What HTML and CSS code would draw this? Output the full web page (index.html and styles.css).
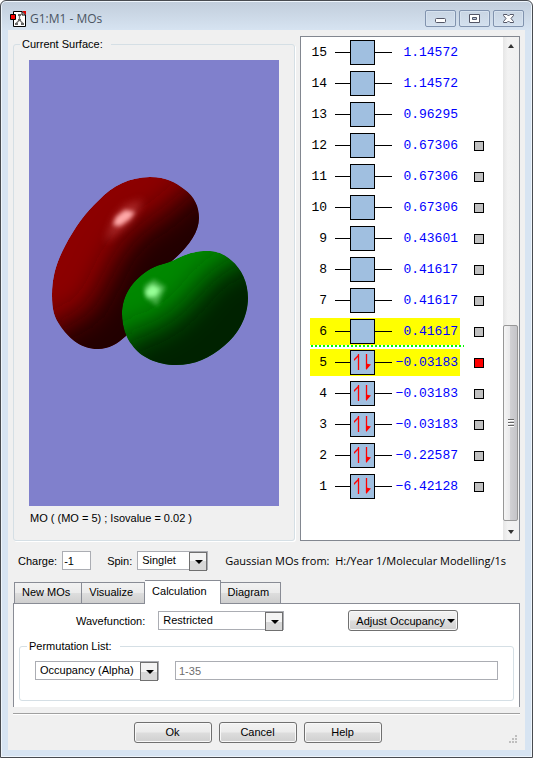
FILE: index.html
```html
<!DOCTYPE html>
<html lang="en">
<head>
  <meta charset="UTF-8">
  <meta name="viewport" content="width=device-width, initial-scale=1.0">
  <title>G1:M1 - MOs</title>
  <link rel="stylesheet" href="styles.css">
</head>
<body>

<!-- shared orbital arrows -->
<svg class="defs" width="0" height="0" aria-hidden="true">
  <symbol id="pair" viewBox="0 0 23 23">
    <path d="M7.5 19V3" fill="none" stroke="#f00" stroke-width="1.3"/>
    <path d="M8 3L3 8V10L8 5z" fill="#f00"/>
    <path d="M15.500 3V18" stroke="#f00" stroke-width="1.3"/>
    <path d="M15 19V12.500L20 13.500z" fill="#f00"/>
  </symbol>
</svg>

<div class="window">
  <header class="titlebar">
    <svg class="app-icon" width="16" height="16" viewBox="0 0 16 16" aria-hidden="true">
      <path d="M3.500 .5H12L15.500 4V15.500H3.500z" fill="#fff" stroke="#000"/>
      <path d="M12 0L16 4V0z" fill="#d00"/>
      <path d="M12 .5V4H15.500" fill="none" stroke="#000"/>
      <path d="M9.500 4V9M9.500 9L6 12.500M9.500 9L13 12.500" stroke="#777" stroke-width="1.3"/>
      <path d="M8 3h3v2h-3zM8 8h3v2h-3zM5 12h3v2h-3zM11 12h3v2h-3z" fill="#666"/>
      <path d="M.5 3.500h5v5h-5z" fill="#f00" stroke="#000"/>
    </svg>
    <h1>G1:M1 - MOs</h1>
    <div class="window-buttons">
      <button type="button" aria-label="Minimize">
        <svg width="13" height="13" viewBox="0 0 13 13"><rect x="1.500" y="6.500" width="10" height="4" rx="1" fill="#fff" stroke="#535666"/></svg>
      </button>
      <button type="button" aria-label="Maximize">
        <svg width="13" height="13" viewBox="0 0 13 13"><path d="M1.500 2.500h10v8h-10z" fill="#fff" stroke="#535666"/><path d="M4.500 5.500h4v2h-4z" fill="#b8c8dc" stroke="#535666"/></svg>
      </button>
      <button type="button" aria-label="Close">
        <svg width="13" height="13" viewBox="0 0 13 13"><path d="M1.500 2.500h3.500l1.500 1.500 1.500-1.500h3.500v1l-2.500 3 2.500 3v1h-3.500l-1.500-1.500-1.500 1.500h-3.500v-1l2.500-3-2.500-3z" fill="#fff" stroke="#535666"/></svg>
      </button>
    </div>
  </header>

  <main class="client">
    <div class="viewer">
      <fieldset class="surface">
        <legend>Current Surface:</legend>
        <svg class="canvas" viewBox="0 0 250 446" preserveAspectRatio="xMidYMid meet" role="img" aria-label="Orbital surface">
          <defs>
            <filter id="soft" x="-50%" y="-50%" width="200%" height="200%"><feGaussianBlur stdDeviation="16"/></filter>
            <filter id="glint" x="-50%" y="-50%" width="200%" height="200%"><feGaussianBlur stdDeviation="4"/></filter>
            <filter id="spark" x="-50%" y="-50%" width="200%" height="200%"><feGaussianBlur stdDeviation="2"/></filter>
            <path id="redLobe" d="M121 117C138 117 147 123 155 129C166 137 170 147 170 158C170 174 157 189 143 201L130 240L97 276C88 284 80 289 69 289C52 289 41 279 32 267C25 257 23 250 23 235C23 216 28 201 36 186C46 167 56 153 70 140C83 126 101 117 121 117z"/>
            <path id="greenLobe" d="M178 191C190 191 196 195 202 200C213 209 219 223 219 238C219 257 209 275 195 286C181 298 166 305 147 305C128 305 111 297 103 285C97 278 93 266 93 254C93 236 103 221 118 211C128 204 137 204 145 200C155 195 164 191 178 191z"/>
            <clipPath id="redClip"><use href="#redLobe"/></clipPath>
            <clipPath id="greenClip"><use href="#greenLobe"/></clipPath>
          </defs>
          <g clip-path="url(#redClip)">
            <use href="#redLobe" fill="#8c0000"/>
            <path d="M200 105L163 128L138 152L106 172L87 198L74 226L58 254L15 270L20 340H240z" fill="#200000" filter="url(#soft)"/>
            <path d="M76 182L86 157L96 146L114 140L101 162z" fill="#d05050" opacity=".6" filter="url(#glint)"/>
            <path d="M84 165L87 157L96 150L106 152L101 159L91 166z" fill="#ffa8a8" filter="url(#spark)"/>
          </g>
          <g clip-path="url(#greenClip)">
            <use href="#greenLobe" fill="#008800"/>
            <path d="M250 185L207 200L180 217L160 243L135 264L85 282L90 345H260z" fill="#002000" filter="url(#soft)"/>
            <path d="M115 226L125 219L137 227L128 246L117 238z" fill="#5cc05c" opacity=".7" filter="url(#spark)"/>
            <path d="M116 231L123 224L132 229L127 237L118 237z" fill="#96ff96" filter="url(#spark)"/>
          </g>
        </svg>
        <p>MO ( (MO = 5) ; Isovalue = 0.02 )</p>
      </fieldset>

      <section class="levels" aria-label="Orbital energies">
        <ol class="orbitals">
          <li><span class="orbital"><b>15</b><i></i><span>1.14572</span></span></li>
          <li><span class="orbital"><b>14</b><i></i><span>1.14572</span></span></li>
          <li><span class="orbital"><b>13</b><i></i><span>0.96295</span></span></li>
          <li><span class="orbital"><b>12</b><i></i><span>0.67306</span></span><input type="checkbox" aria-label="MO 12"></li>
          <li><span class="orbital"><b>11</b><i></i><span>0.67306</span></span><input type="checkbox" aria-label="MO 11"></li>
          <li><span class="orbital"><b>10</b><i></i><span>0.67306</span></span><input type="checkbox" aria-label="MO 10"></li>
          <li><span class="orbital"><b>9</b><i></i><span>0.43601</span></span><input type="checkbox" aria-label="MO 9"></li>
          <li><span class="orbital"><b>8</b><i></i><span>0.41617</span></span><input type="checkbox" aria-label="MO 8"></li>
          <li><span class="orbital"><b>7</b><i></i><span>0.41617</span></span><input type="checkbox" aria-label="MO 7"></li>
          <li class="lumo"><span class="orbital selected"><b>6</b><i></i><span>0.41617</span></span><input type="checkbox" aria-label="MO 6"></li>
          <li><span class="orbital selected"><b>5</b><i><svg><use href="#pair"/></svg></i><span>−0.03183</span></span><input type="checkbox" aria-label="MO 5" checked></li>
          <li><span class="orbital"><b>4</b><i><svg><use href="#pair"/></svg></i><span>−0.03183</span></span><input type="checkbox" aria-label="MO 4"></li>
          <li><span class="orbital"><b>3</b><i><svg><use href="#pair"/></svg></i><span>−0.03183</span></span><input type="checkbox" aria-label="MO 3"></li>
          <li><span class="orbital"><b>2</b><i><svg><use href="#pair"/></svg></i><span>−0.22587</span></span><input type="checkbox" aria-label="MO 2"></li>
          <li><span class="orbital"><b>1</b><i><svg><use href="#pair"/></svg></i><span>−6.42128</span></span><input type="checkbox" aria-label="MO 1"></li>
        </ol>
        <div class="scrollbar">
          <button type="button" class="scroll-up" aria-label="Scroll up"></button>
          <div class="track"><div class="thumb"></div></div>
          <button type="button" class="scroll-down" aria-label="Scroll down"></button>
        </div>
      </section>
    </div>

    <div class="state">
      <label for="charge">Charge:</label>
      <input type="text" id="charge" value="-1">
      <label for="spin">Spin:</label>
      <span class="dropdown spin"><select id="spin"><option>Singlet</option></select></span>
      <span class="source">Gaussian MOs from:&nbsp; H:/Year 1/Molecular Modelling/1s</span>
    </div>

    <div class="tabs" role="tablist">
      <button type="button" role="tab">New MOs</button>
      <button type="button" role="tab">Visualize</button>
      <button type="button" role="tab" class="active" aria-selected="true">Calculation</button>
      <button type="button" role="tab">Diagram</button>
    </div>

    <div class="panel" role="tabpanel">
      <div class="wave">
        <label for="wavefunction">Wavefunction:</label>
        <span class="dropdown"><select id="wavefunction"><option>Restricted</option></select></span>
        <button type="button" class="btn adjust">Adjust Occupancy</button>
      </div>
      <fieldset class="permutation">
        <legend>Permutation List:</legend>
        <div class="permutation-row">
          <span class="dropdown"><select aria-label="Permutation type"><option>Occupancy (Alpha)</option></select></span>
          <input type="text" aria-label="Permutation list" value="1-35" disabled>
        </div>
      </fieldset>
    </div>

    <footer class="actions">
      <button type="button" class="btn">Ok</button>
      <button type="button" class="btn">Cancel</button>
      <button type="button" class="btn">Help</button>
      <svg class="grip" width="8" height="8" viewBox="0 0 8 8" aria-hidden="true">
        <path d="M6 0h2v2h-2zM3 3h2v2h-2zM6 3h2v2h-2zM0 6h2v2h-2zM3 6h2v2h-2zM6 6h2v2h-2z" fill="#bfbfbf"/>
      </svg>
    </footer>
  </main>
</div>

</body>
</html>
```
FILE: styles.css
```css
* {
  box-sizing: border-box;
}

body {
  margin: 0;
  background-color: #fff;
  font-family: "Liberation Sans", Arial, sans-serif;
  font-size: 11px;
  line-height: 14px;
  color: #000;
}

.defs {
  display: none;
}

button,
input,
select {
  font: inherit;
  color: inherit;
  margin: 0;
}

fieldset {
  margin: 0;
  min-width: 0;
  border: 1px solid #d5dfe5;
  border-radius: 3px;
}

legend {
  padding: 0 8px 0 2px;
}

.window {
  display: flex;
  flex-direction: column;
  min-height: 100vh;
  padding: 0 7px 7px;
  border: 1px solid #484b50;
  border-radius: 6px 6px 0 0;
  background: linear-gradient(#c1cddb, #d7e4f2 30px);
  box-shadow: inset 0 0 0 1px #eef5fc;
}

/* title bar */
.titlebar {
  display: flex;
  align-items: center;
  height: 29px;
  padding: 6px 1px 0 2px;
  gap: 4px;
}

.titlebar h1 {
  flex: 1;
  margin: 0;
  font-family: "Open Sans", "Segoe UI", sans-serif;
  font-size: 12px;
  font-weight: normal;
  color: #4b5563;
}

.window-buttons {
  display: flex;
  gap: 3px;
}

.window-buttons button {
  display: flex;
  align-items: center;
  justify-content: center;
  width: 31px;
  height: 17px;
  padding: 0;
  border: 1px solid #8193ae;
  border-radius: 2px;
  background: none;
  box-shadow: inset 0 0 0 1px #d6e2ef;
}

.client {
  flex: 1;
  display: flex;
  flex-direction: column;
  padding: 6px 5px 7px;
  background-color: #f0f0f0;
}

/* surface and energy levels */
.viewer {
  flex: 1;
  display: flex;
  gap: 5px;
}

.surface {
  flex: 1;
  display: flex;
  flex-direction: column;
  margin-top: 1px;
  padding: 9px 15px 15px;
  box-shadow: 1px 1px 0 #fff;
}

.surface legend {
  margin-left: -9px;
}

.canvas {
  flex: 1;
  width: 100%;
  height: 0;
  min-height: 0;
  background-color: #8080cc;
}

.surface p {
  margin: 5px 0 0 1px;
}

.levels {
  display: flex;
  width: 220px;
  border: 1px solid #828790;
  background-color: #fff;
}

.orbitals {
  flex: 1;
  display: flex;
  flex-direction: column;
  gap: 4px;
  margin: 0;
  padding: 2px 0 0 9px;
  list-style: none;
  font-family: "Liberation Mono", "Courier New", monospace;
  font-size: 13px;
}

.orbitals li {
  position: relative;
  display: flex;
  align-items: center;
  gap: 14px;
}

.orbital {
  display: flex;
  align-items: center;
  width: 150px;
  height: 27px;
}

.orbital.selected {
  background-color: #ff0;
}

.orbital b {
  width: 17px;
  margin-right: 8px;
  font-weight: normal;
  text-align: right;
}

/* box with a short level line on each side */
.orbital i {
  display: flex;
  align-items: center;
  height: 25px;
  background: linear-gradient(#a0bfe0, #a0bfe0) 16px center / 23px 23px no-repeat,
              linear-gradient(#000, #000) 15px center / 25px 25px no-repeat;
}

.orbital i::before,
.orbital i::after {
  content: "";
  width: 15px;
  height: 1px;
  background-color: #000;
}

.orbital i::after {
  width: 17px;
  margin-left: 25px;
}

.orbital i svg {
  width: 23px;
  height: 23px;
  margin: 0 -24px 0 1px;
}

.orbital > span {
  flex: 1;
  padding-right: 2px;
  text-align: right;
  color: #00f;
  white-space: nowrap;
}

/* border between empty and filled levels */
.lumo::after {
  content: "";
  position: absolute;
  left: 1px;
  bottom: -2px;
  width: 153px;
  height: 2px;
  background: repeating-linear-gradient(90deg, #0f0 0 2px, transparent 2px 4px);
}

.orbitals input {
  appearance: none;
  width: 10px;
  height: 10px;
  border: 1px solid #000;
  background-color: #c0c0c0;
}

.orbitals input:checked {
  background-color: #f00;
}

.scrollbar {
  display: flex;
  flex-direction: column;
  width: 16px;
  background: linear-gradient(90deg, #e6e6e6, #f2f2f2 30%, #f0f0f0);
}

.scrollbar button {
  display: flex;
  align-items: center;
  justify-content: center;
  height: 17px;
  padding: 0;
  border: none;
  background: none;
}

.scroll-up::before,
.scroll-down::before,
.dropdown::after,
.adjust::after {
  content: "";
  border: 3px solid transparent;
  border-bottom: 4px solid #333;
  border-top: none;
}

.scroll-down::before {
  border-top: 4px solid #333;
  border-bottom: none;
}

.track {
  flex: 1;
  display: flex;
  align-items: flex-end;
  padding-bottom: 2px;
}

.thumb {
  display: flex;
  align-items: center;
  justify-content: center;
  width: 15px;
  height: 42%;
  border: 1px solid #979797;
  border-radius: 2px;
  background: linear-gradient(90deg, #f5f5f5, #e9e9eb 45%, #d0d0d3 50%, #c4c4c8);
}

.thumb::before {
  content: "";
  width: 6px;
  height: 8px;
  background: repeating-linear-gradient(#666 0 1px, #fff 1px 2px, transparent 2px 3px);
}

/* charge and spin */
.state {
  display: flex;
  align-items: center;
  height: 19px;
  margin: 10px 5px 0;
}

input[type="text"] {
  height: 19px;
  padding: 0 3px;
  border: 1px solid #abadb3;
  background-color: #fff;
}

#charge {
  width: 29px;
  margin: 0 16px 0 5px;
  padding: 0 1px;
}

.dropdown {
  position: relative;
  display: flex;
}

.dropdown select {
  appearance: none;
  width: 100%;
  height: 19px;
  padding: 0 18px 2px 4px;
  border: 1px solid #abadb3;
  border-radius: 0;
  background: #fff;
}

.dropdown::before {
  content: "";
  position: absolute;
  top: 1px;
  right: 1px;
  width: 16px;
  height: 17px;
  border: 1px solid #707070;
  background: linear-gradient(#f4f4f4 50%, #d8d8d8 50%);
  pointer-events: none;
}

.dropdown::after {
  position: absolute;
  top: 9px;
  right: 5px;
  border: 4px solid transparent;
  border-top-color: #000;
  border-bottom: none;
  pointer-events: none;
}

.dropdown.spin {
  width: 71px;
  margin: 0 17px 0 5px;
}

.source {
  flex: 1;
  font-family: "Open Sans", "Segoe UI", sans-serif;
  white-space: nowrap;
}

/* tabs */
.tabs {
  display: flex;
  align-items: flex-end;
  height: 24px;
  margin-top: 10px;
  padding-left: 1px;
}

.tabs button {
  height: 22px;
  padding: 0 11px 3px 7px;
  border: 1px solid #898c95;
  background: linear-gradient(#f2f2f2, #ebebeb 48%, #dddddd 52%, #cfcfcf);
}

.tabs button + button {
  border-left: none;
}

.tabs .active {
  position: relative;
  z-index: 1;
  height: 24px;
  padding-right: 13px;
  border-bottom: none;
  background: #fff;
}

.panel {
  margin-top: -1px;
  padding: 6px 5px;
  border: 1px solid #898c95;
  border-bottom: none;
  background: #fff;
}

.wave {
  display: flex;
  align-items: center;
  padding-left: 57px;
}

.wave .dropdown {
  width: 126px;
  margin: 0 64px 0 13px;
}

.btn {
  height: 21px;
  padding: 0 7px 2px;
  border: 1px solid #707070;
  border-radius: 3px;
  background: linear-gradient(#f2f2f2, #ebebeb 48%, #dddddd 52%, #cfcfcf);
  box-shadow: inset 0 0 0 1px #f8f8f8;
}

.adjust {
  display: flex;
  align-items: center;
  gap: 2px;
  padding: 0 2px 0 7px;
  white-space: nowrap;
}

.adjust::after {
  border: 4px solid transparent;
  border-top-color: #000;
  border-bottom: none;
}

.permutation {
  margin-top: 8px;
  padding: 8px 15px 20px;
}

.permutation legend {
  margin-left: -8px;
}

.permutation-row {
  display: flex;
  gap: 16px;
}

.permutation .dropdown {
  width: 124px;
}

.permutation input {
  flex: 1;
  min-width: 0;
  color: #6d6d6d;
}

/* bottom buttons */
.actions {
  position: relative;
  display: flex;
  justify-content: center;
  gap: 7px;
  margin-top: 6px;
  padding: 8px 18px 0 0;
  border-top: 1px solid #a0a0a0;
  box-shadow: inset 0 1px 0 #fff;
}

.actions .btn {
  width: 78px;
}

.grip {
  position: absolute;
  right: 3px;
  bottom: 0;
}
```
